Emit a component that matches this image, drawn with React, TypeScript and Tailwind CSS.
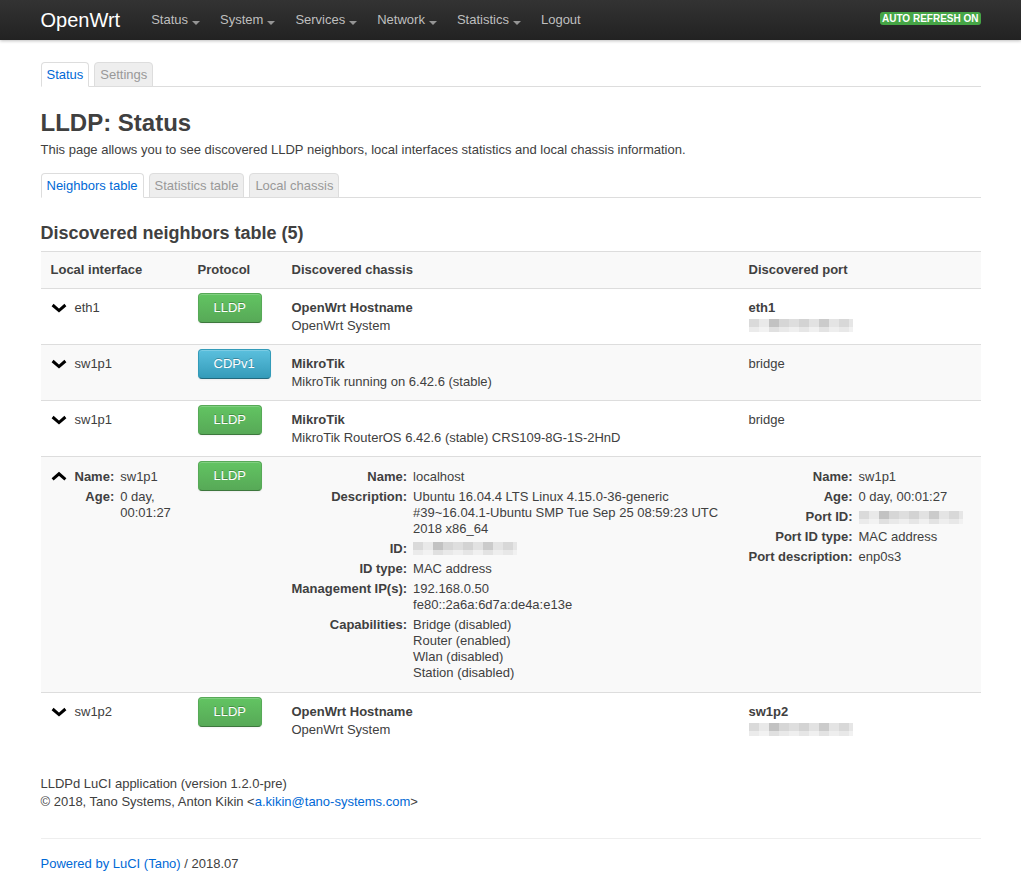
import type { ReactNode } from "react";

const navItems = ["Status", "System", "Services", "Network", "Statistics"];

const blurTop = [
  "bg-[#dadada]", "bg-[#e9e9e9]", "bg-[#c2c2c2]", "bg-[#d6d6d6]", "bg-[#dedede]",
  "bg-[#d3d3d3]", "bg-[#e2e2e2]", "bg-[#cbcbcb]", "bg-[#e4e4e4]", "bg-[#d8d8d8]", "bg-[#e6e6e6]",
];
const blurBottom = [
  "bg-[#ebebeb]", "bg-[#f2f2f2]", "bg-[#e0e0e0]", "bg-[#e9e9e9]", "bg-[#efefef]",
  "bg-[#e6e6e6]", "bg-[#f0f0f0]", "bg-[#e3e3e3]", "bg-[#eeeeee]", "bg-[#e8e8e8]", "bg-[#f1f1f1]",
];

function Blur({ cols = 11 }: { cols?: number }) {
  return (
    <div className="flex h-[13px] w-fit">
      {blurTop.slice(0, cols).map((c, i) => (
        <div key={i} className={"flex flex-col " + (i === cols - 1 ? "w-[4px]" : "w-[10px]")}>
          <div className={"h-[8px] " + c} />
          <div className={"h-[5px] " + blurBottom[i]} />
        </div>
      ))}
    </div>
  );
}

function Caret() {
  return (
    <span className="ml-1 mt-[6px] inline-block h-0 w-0 border-x-4 border-t-4 border-x-transparent border-t-white opacity-50" />
  );
}

function Tabs({ items, active }: { items: string[]; active: number }) {
  return (
    <ul className="flex gap-[5px] border-b border-[#ddd]">
      {items.map((t, i) => (
        <li
          key={t}
          className={
            i === active
              ? "-mb-px rounded-t-[4px] border border-[#ddd] border-b-white bg-white px-[5px] leading-[23px] text-[#0069d6]"
              : "-mb-px rounded-t-[4px] border border-[#ddd] bg-[#eee] px-[5px] leading-[23px] text-[#999]"
          }
        >
          {t}
        </li>
      ))}
    </ul>
  );
}

function ChevronDown() {
  return (
    <svg width="16" height="18" viewBox="0 0 16 18" className="shrink-0">
      <polyline points="1.6,6 8,11.6 14.4,6" fill="none" stroke="#000" strokeWidth="3" />
    </svg>
  );
}

function ChevronUp() {
  return (
    <svg width="16" height="16" viewBox="0 0 16 16" className="shrink-0">
      <polyline points="1.6,10.4 8,4.8 14.4,10.4" fill="none" stroke="#000" strokeWidth="3" />
    </svg>
  );
}

function Btn({ label, info }: { label: string; info?: boolean }) {
  return (
    <span
      className={
        "inline-block rounded-[4px] border px-[15px] pt-[5px] pb-[5px] leading-[18px] text-white shadow-[inset_0_1px_0_rgba(255,255,255,0.2),0_1px_2px_rgba(0,0,0,0.05)] [text-shadow:0_-1px_0_rgba(0,0,0,0.25)] bg-linear-to-b " +
        (info
          ? "border-[#339bb9] border-b-[#22697d] from-[#5bc0de] to-[#339bb9]"
          : "border-[#57a957] border-b-[#3d773d] from-[#62c462] to-[#57a957]")
      }
    >
      {label}
    </span>
  );
}

function Dl({ rows }: { rows: [string, ReactNode][] }) {
  return (
    <div className="grid grid-cols-[auto_1fr] gap-x-[6px] gap-y-[4px] leading-[16px]">
      {rows.map(([k, v]) => (
        <div key={k} className="contents">
          <div className="whitespace-nowrap text-right font-bold">{k}</div>
          <div>{v}</div>
        </div>
      ))}
    </div>
  );
}

type Row = {
  iface: string;
  proto: string;
  info?: boolean;
  chassis: string;
  desc: string;
  port: string;
  portBold?: boolean;
  mac?: boolean;
};

const rows: Row[] = [
  { iface: "eth1", proto: "LLDP", chassis: "OpenWrt Hostname", desc: "OpenWrt System", port: "eth1", portBold: true, mac: true },
  { iface: "sw1p1", proto: "CDPv1", info: true, chassis: "MikroTik", desc: "MikroTik running on 6.42.6 (stable)", port: "bridge" },
  { iface: "sw1p1", proto: "LLDP", chassis: "MikroTik", desc: "MikroTik RouterOS 6.42.6 (stable) CRS109-8G-1S-2HnD", port: "bridge" },
];

const td = "border-t border-[#ddd] px-[10px] pt-[10px] pb-[9px] align-top";
const tdBtn = "border-t border-[#ddd] px-[10px] pt-[4px] pb-[9px] align-top";
const tdWide = "border-t border-[#ddd] px-[10px] pt-[12px] pb-[11px] align-top";

function NeighborRow({ r, odd }: { r: Row; odd?: boolean }) {
  return (
    <tr className={odd ? "bg-[#f9f9f9]" : ""}>
      <td className={td}>
        <div className="flex gap-[8px]">
          <ChevronDown />
          <span>{r.iface}</span>
        </div>
      </td>
      <td className={tdBtn}>
        <Btn label={r.proto} info={r.info} />
      </td>
      <td className={td}>
        <div className="font-bold">{r.chassis}</div>
        <div>{r.desc}</div>
      </td>
      <td className={td}>
        <div className={r.portBold ? "font-bold" : ""}>{r.port}</div>
        {r.mac && (
          <div className="pt-[2px] pb-[3px]">
            <Blur />
          </div>
        )}
      </td>
    </tr>
  );
}

export default function App() {
  return (
    <div className="min-h-screen bg-white font-['Liberation_Sans',Arial,sans-serif] text-[13px] leading-[18px] text-[#404040]">
      <nav className="h-10 bg-linear-to-b from-[#333] to-[#222] shadow-[0_1px_3px_rgba(0,0,0,0.25)]">
        <div className="mx-auto flex h-full w-[940px] items-center">
          <span className="pr-[21px] text-[20px] leading-none text-white">OpenWrt</span>
          <ul className="flex">
            {navItems.map((n) => (
              <li key={n} className="flex items-center px-[10px] text-[#bfbfbf]">
                {n}
                <Caret />
              </li>
            ))}
            <li className="px-[10px] text-[#bfbfbf]">Logout</li>
          </ul>
          <span className="-mt-[3px] ml-auto rounded-[3px] bg-[#46a546] px-[2px] text-[10px] leading-[13px] font-bold text-white">
            AUTO REFRESH ON
          </span>
        </div>
      </nav>

      <main className="mx-auto w-[940px]">
        <div className="pt-[22px]">
          <Tabs items={["Status", "Settings"]} active={0} />
        </div>
        <h2 className="mt-[18px] text-[24px] leading-[36px] font-bold">LLDP: Status</h2>
        <p>This page allows you to see discovered LLDP neighbors, local interfaces statistics and local chassis information.</p>
        <div className="mt-[14px]">
          <Tabs items={["Neighbors table", "Statistics table", "Local chassis"]} active={0} />
        </div>
        <h3 className="mt-[22px] text-[18px] leading-[27px] font-bold">Discovered neighbors table (5)</h3>

        <table className="mt-[4px] w-full table-fixed border-collapse">
          <colgroup>
            <col className="w-[147px]" />
            <col className="w-[94px]" />
            <col className="w-[457px]" />
            <col className="w-[242px]" />
          </colgroup>
          <thead>
            <tr className="bg-[#f9f9f9]">
              {["Local interface", "Protocol", "Discovered chassis", "Discovered port"].map((h) => (
                <th key={h} className="border-t border-[#ddd] px-[10px] py-[9px] text-left font-bold">
                  {h}
                </th>
              ))}
            </tr>
          </thead>
          <tbody>
            <NeighborRow r={rows[0]} />
            <NeighborRow r={rows[1]} odd />
            <NeighborRow r={rows[2]} />
            <tr className="bg-[#f9f9f9]">
              <td className={tdWide}>
                <div className="flex gap-[8px]">
                  <ChevronUp />
                  <Dl
                    rows={[
                      ["Name:", "sw1p1"],
                      ["Age:", <>0 day,<br />00:01:27</>],
                    ]}
                  />
                </div>
              </td>
              <td className={tdBtn}>
                <Btn label="LLDP" />
              </td>
              <td className={tdWide}>
                <Dl
                  rows={[
                    ["Name:", "localhost"],
                    [
                      "Description:",
                      <>
                        Ubuntu 16.04.4 LTS Linux 4.15.0-36-generic
                        <br />
                        <span className="whitespace-nowrap">#39~16.04.1-Ubuntu SMP Tue Sep 25 08:59:23 UTC</span>
                        <br />
                        2018 x86_64
                      </>,
                    ],
                    ["ID:", <div className="pt-[1px]"><Blur /></div>],
                    ["ID type:", "MAC address"],
                    ["Management IP(s):", <>192.168.0.50<br />fe80::2a6a:6d7a:de4a:e13e</>],
                    [
                      "Capabilities:",
                      <>
                        Bridge (disabled)
                        <br />
                        Router (enabled)
                        <br />
                        Wlan (disabled)
                        <br />
                        Station (disabled)
                      </>,
                    ],
                  ]}
                />
              </td>
              <td className={tdWide}>
                <Dl
                  rows={[
                    ["Name:", "sw1p1"],
                    ["Age:", "0 day, 00:01:27"],
                    ["Port ID:", <div className="pt-[2px]"><Blur /></div>],
                    ["Port ID type:", "MAC address"],
                    ["Port description:", "enp0s3"],
                  ]}
                />
              </td>
            </tr>
            <NeighborRow
              r={{ iface: "sw1p2", proto: "LLDP", chassis: "OpenWrt Hostname", desc: "OpenWrt System", port: "sw1p2", portBold: true, mac: true }}
            />
          </tbody>
        </table>

        <footer className="mt-[27px]">
          <p>LLDPd LuCI application (version 1.2.0-pre)</p>
          <p>
            © 2018, Tano Systems, Anton Kikin &lt;<span className="text-[#0069d6]">a.kikin@tano-systems.com</span>&gt;
          </p>
          <hr className="mt-[27px] border-t border-[#eee]" />
          <p className="mt-[16px] pb-[16px]">
            <span className="text-[#0069d6]">Powered by LuCI (Tano)</span> / 2018.07
          </p>
        </footer>
      </main>
    </div>
  );
}
